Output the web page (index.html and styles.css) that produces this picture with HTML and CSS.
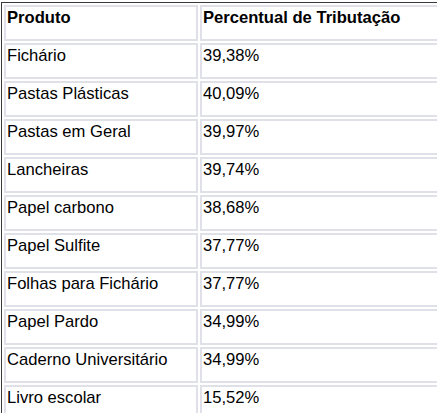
FILE: index.html
```html
<!DOCTYPE html>
<html>
<head>
    <meta charset="utf-8">
    <title>Tributação material escolar</title>
    <link rel="stylesheet" href="styles.css">
</head>
<body>
    <table class="tax-table">
        <tr>
            <th class="col-product">Produto</th>
            <th>Percentual de Tributação</th>
        </tr>
        <tr><td>Fichário</td><td>39,38%</td></tr>
        <tr><td>Pastas Plásticas</td><td>40,09%</td></tr>
        <tr><td>Pastas em Geral</td><td>39,97%</td></tr>
        <tr><td>Lancheiras</td><td>39,74%</td></tr>
        <tr><td>Papel carbono</td><td>38,68%</td></tr>
        <tr><td>Papel Sulfite</td><td>37,77%</td></tr>
        <tr><td>Folhas para Fichário</td><td>37,77%</td></tr>
        <tr><td>Papel Pardo</td><td>34,99%</td></tr>
        <tr><td>Caderno Universitário</td><td>34,99%</td></tr>
        <tr><td>Livro escolar</td><td>15,52%</td></tr>
    </table>
</body>
</html>
```

FILE: styles.css
```css
body {
    margin: 0;
    background: #fff;
    font-family: "Liberation Sans", Arial, sans-serif;
    color: #000;
}
.tax-table {
    margin: 2px 0 0 1px;
    width: 480px;
    border: 1px solid #3a3a3a;
    border-spacing: 2px;
    font-size: 16.6px;
}
.tax-table th,
.tax-table td {
    height: 28px;
    padding: 2px 2px 2px 1px;
    border: 2px solid #e0e0e8;
    text-align: left;
    vertical-align: top;
    line-height: 18px;
}
.tax-table th {
    font-weight: bold;
}
.col-product {
    width: 187px;
}
```
